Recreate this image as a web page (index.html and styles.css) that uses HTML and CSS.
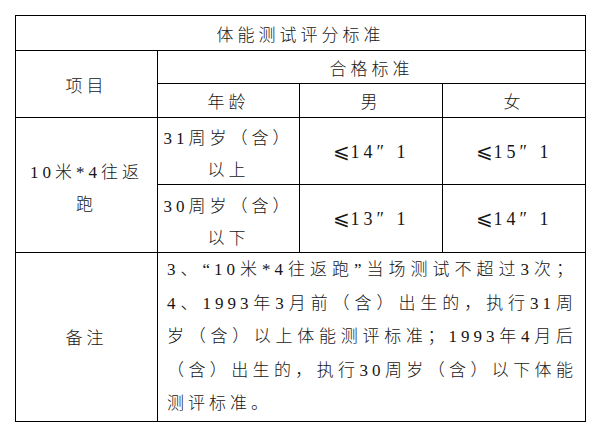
FILE: index.html
```html
<!DOCTYPE html>
<html lang="zh-CN">
<head>
<meta charset="utf-8">
<title>体能测试评分标准</title>
<link rel="stylesheet" href="styles.css">
</head>
<body>
<table class="std">
  <colgroup>
    <col class="c1"><col class="c2"><col class="c3"><col class="c4">
  </colgroup>
  <tr class="r-title"><td colspan="4">体能测试评分标准</td></tr>
  <tr class="r-h1">
    <td rowspan="2">项目</td>
    <td colspan="3">合格标准</td>
  </tr>
  <tr class="r-h2"><td>年龄</td><td>男</td><td>女</td></tr>
  <tr class="r-a">
    <td rowspan="2"><div class="shift">10米*4往返<br>跑</div></td>
    <td class="age"><div class="shift">31周岁（含）<br>以上</div></td>
    <td class="num"><span class="le">⩽</span>14″ 1</td>
    <td class="num"><span class="le">⩽</span>15″ 1</td>
  </tr>
  <tr class="r-b">
    <td class="age"><div class="shift">30周岁（含）<br>以下</div></td>
    <td class="num"><span class="le">⩽</span>13″ 1</td>
    <td class="num"><span class="le">⩽</span>14″ 1</td>
  </tr>
  <tr class="r-note">
    <td>备注</td>
    <td colspan="3" class="note">
      <div class="jl">3、“10米*4往返跑”当场测试不超过3次；</div>
      <div class="jl">4、1993年3月前（含）出生的，执行31周</div>
      <div class="jl">岁（含）以上体能测评标准；1993年4月后</div>
      <div class="jl">（含）出生的，执行30周岁（含）以下体能</div>
      <div class="last">测评标准。</div>
    </td>
  </tr>
</table>
</body>
</html>
```
FILE: styles.css
```css
html, body {
  margin: 0;
  padding: 0;
  background: #fff;
}
body {
  padding: 15px 0 0 15px;
  font-family: "Liberation Serif", "Noto Sans CJK SC", serif;
  color: #151515;
}
.std {
  border-collapse: collapse;
  width: 570px;
  table-layout: fixed;
  font-size: 17px;
  font-weight: 300;
  letter-spacing: 4px;
}
.std td {
  border: 1px solid #000;
  text-align: center;
  vertical-align: middle;
  padding: 0;
}
.c1, .c2 { width: 142px; }
.c3, .c4 { width: 143px; }
.r-title td { height: 34px; }
.r-h1 td { height: 32px; }
.r-h2 td { height: 33px; }
.r-a td { height: 66px; line-height: 32px; }
.r-b td { height: 67px; line-height: 32px; }
.shift {
  margin-top: 4px;
  margin-bottom: -4px;
}
.r-note td { height: 166px; }
.num { font-size: 18px; }
.le {
  font-family: "DejaVu Sans", sans-serif;
  font-size: 20px;
  letter-spacing: 1px;
}
.note {
  padding: 0 8px 0 9px !important;
  vertical-align: top !important;
  line-height: 33.5px;
  text-align: left !important;
}
.jl {
  text-align: justify;
  text-align-last: justify;
  white-space: nowrap;
}
.last { text-align: left; }
```
